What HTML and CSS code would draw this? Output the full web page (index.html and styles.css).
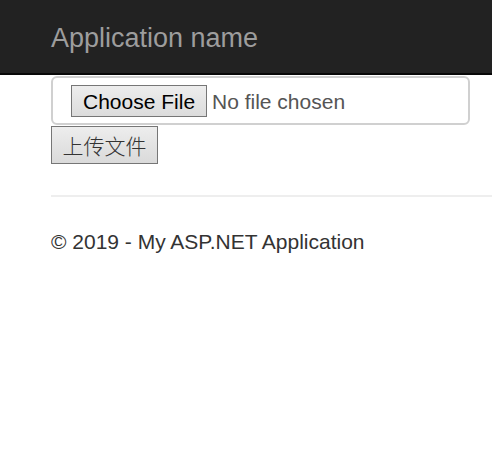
FILE: index.html
```html
<!DOCTYPE html>
<html>
<head>
<meta charset="utf-8">
<title>Upload</title>
<link rel="stylesheet" href="styles.css">
</head>
<body>
<header class="navbar">
  <a class="brand" href="#">Application name</a>
</header>
<main class="content">
  <form class="upload-form">
    <div class="file-control">
      <span class="file-btn">Choose File</span>
      <span class="file-name">No file chosen</span>
    </div>
    <button type="button" class="submit-btn">上传文件</button>
  </form>
  <hr class="divider">
  <footer class="footer">© 2019 - My ASP.NET Application</footer>
</main>
</body>
</html>
```
FILE: styles.css
```css
html, body {
  margin: 0;
  padding: 0;
  background: #fff;
}
body {
  font-family: "Liberation Sans", Arial, sans-serif;
  color: #333;
}
.navbar {
  background: #222;
  border-bottom: 2px solid #080808;
  padding-left: 51px;
  padding-top: 23px;
  box-sizing: content-box;
  height: 50px;
}
.brand {
  display: block;
  font-size: 27px;
  line-height: 31px;
  color: #9d9d9d;
  text-decoration: none;
}
.content {
  padding-left: 51px;
}
.upload-form {
  display: flex;
  flex-direction: column;
  align-items: flex-start;
}
.file-control {
  margin-top: 1px;
  box-sizing: border-box;
  width: 419px;
  height: 49px;
  border: 2px solid #d0d0d0;
  border-radius: 6px;
  display: flex;
  align-items: center;
  padding-left: 18px;
  gap: 5px;
}
.file-btn {
  box-sizing: border-box;
  height: 32px;
  width: 136px;
  border: 1px solid #767676;
  background: linear-gradient(#ededed, #dcdcdc);
  color: #000;
  font-size: 21px;
  line-height: 31px;
  padding-left: 11px;
  margin-top: 1px;
}
.file-name {
  font-size: 21px;
  color: #555;
  margin-top: 3px;
}
.submit-btn {
  margin-top: 1px;
  box-sizing: border-box;
  width: 107px;
  height: 38px;
  border: 1px solid #767676;
  border-radius: 0;
  background: linear-gradient(#ededed, #dadada);
  font-family: "Noto Sans CJK SC", sans-serif;
  font-weight: 300;
  font-size: 21px;
  line-height: 36px;
  color: #333;
  padding: 0;
}
.divider {
  margin: 31px 0 0 0;
  border: 0;
  border-top: 2px solid #eee;
  height: 0;
}
.footer {
  margin-top: 33px;
  font-size: 21px;
  line-height: 24px;
  color: #333;
}
```
